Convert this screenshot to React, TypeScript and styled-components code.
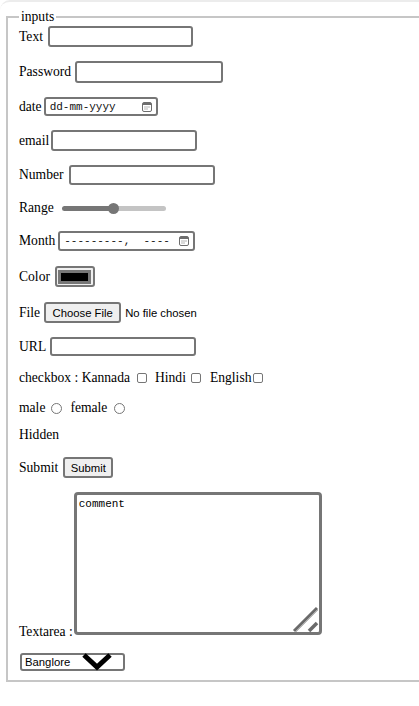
import React from "react";
import styled, { createGlobalStyle } from "styled-components";

const GlobalStyle = createGlobalStyle`
  html, body { margin: 0; padding: 0; background: #fff; overflow: hidden; }
  body {
    font-family: "Liberation Serif", "Times New Roman", serif;
    font-size: 13.6px;
    color: #000;
  }
  * { box-sizing: border-box; }
`;

const Frame = styled.div`
  width: 100%;
  height: 706px;
  border-top: 2px solid #ececec;
  border-top-left-radius: 10px;
`;

const Fieldset = styled.fieldset`
  margin: 6px 0 0 6px;
  padding: 1px 0 9px 11px;
  border: 2px solid #c6c6c6;
  border-right: none;
  min-width: 0;
`;

const Legend = styled.legend`
  padding: 0 2px;
  font-size: 13.6px;
  line-height: 17px;
`;

const Form = styled.div`
  display: flex;
  flex-direction: column;
`;

const Row = styled.div<{ $mt?: number; $h: number; $gap?: number; $align?: string; $ml?: number }>`
  display: flex;
  align-items: ${(p) => p.$align ?? "center"};
  gap: ${(p) => p.$gap ?? 3}px;
  height: ${(p) => p.$h}px;
  margin-top: ${(p) => p.$mt ?? 0}px;
  margin-left: ${(p) => p.$ml ?? 0}px;
  white-space: nowrap;
`;

const Label = styled.span<{ $ml?: number; $mb?: number }>`
  margin-left: ${(p) => p.$ml ?? 0}px;
  margin-bottom: ${(p) => p.$mb ?? 0}px;
  line-height: 16px;
`;

const TextInput = styled.input<{ $w: number; $h: number }>`
  width: ${(p) => p.$w}px;
  height: ${(p) => p.$h}px;
  margin: 0;
  padding: 1px 3px;
  border: 2px solid #767676;
  border-radius: 3px;
  background: #fff;
  font: 11.3px "Liberation Sans", Arial, sans-serif;
  outline: none;
`;

const PickerBox = styled.div<{ $w: number; $h: number; $pl: number }>`
  width: ${(p) => p.$w}px;
  height: ${(p) => p.$h}px;
  border: 2px solid #767676;
  border-radius: 3px;
  background: #fff;
  display: flex;
  align-items: center;
  justify-content: space-between;
  padding: 0 4px 0 ${(p) => p.$pl}px;
  font: 11px "Liberation Mono", "DejaVu Sans Mono", monospace;
  color: #111;
  white-space: pre;
`;

const Range = styled.input`
  -webkit-appearance: none;
  appearance: none;
  width: 104px;
  height: 12px;
  margin: 0;
  background: transparent;
  &::-webkit-slider-runnable-track {
    height: 5px;
    border-radius: 3px;
    background: linear-gradient(to right, #767676 0 50%, #c4c4c4 50% 100%);
  }
  &::-webkit-slider-thumb {
    -webkit-appearance: none;
    width: 11px;
    height: 11px;
    border-radius: 50%;
    background: #767676;
    margin-top: -3px;
    border: none;
  }
`;

const ColorControl = styled.div`
  width: 40px;
  height: 21px;
  border: 2px solid #767676;
  border-radius: 3px;
  background: #efefef;
  display: flex;
  align-items: center;
  justify-content: center;
`;

const Swatch = styled.span`
  width: 33px;
  height: 14px;
  border: 3px solid #777;
  background: #000;
`;

const Button = styled.button<{ $w: number; $h: number }>`
  width: ${(p) => p.$w}px;
  height: ${(p) => p.$h}px;
  margin: 0;
  padding: 0;
  border: 2px solid #767676;
  border-radius: 3px;
  background: #efefef;
  color: #000;
  font: 11.3px "Liberation Sans", Arial, sans-serif;
`;

const SmallText = styled.span`
  font: 11.3px "Liberation Sans", Arial, sans-serif;
`;

const Check = styled.input<{ $ml?: number; $round?: boolean }>`
  -webkit-appearance: none;
  appearance: none;
  width: ${(p) => (p.$round ? 11 : 10)}px;
  height: ${(p) => (p.$round ? 11 : 10)}px;
  margin: 0 0 0 ${(p) => p.$ml ?? 0}px;
  border: 1px solid #767676;
  border-radius: ${(p) => (p.$round ? "50%" : "2px")};
  background: #fff;
`;

const TextareaWrap = styled.div`
  position: relative;
  width: 248px;
  height: 143px;
`;

const Textarea = styled.textarea`
  width: 100%;
  height: 100%;
  margin: 0;
  padding: 3px 2px;
  border: 3px solid #767676;
  border-radius: 4px;
  resize: none;
  font: 11px "Liberation Mono", "DejaVu Sans Mono", monospace;
  color: #000;
  outline: none;
`;

const Grip = styled.svg`
  position: absolute;
  right: 0;
  bottom: 0;
  pointer-events: none;
`;

const SelectWrap = styled.div`
  position: relative;
  width: 105px;
  height: 18px;
`;

const Select = styled.select`
  -webkit-appearance: none;
  appearance: none;
  width: 100%;
  height: 100%;
  margin: 0;
  padding: 0 0 0 3px;
  border: 2px solid #767676;
  border-radius: 3px;
  background: #fff;
  font: 11.3px "Liberation Sans", Arial, sans-serif;
  color: #000;
  outline: none;
`;

const Chevron = styled.svg`
  position: absolute;
  left: 62px;
  top: 0;
  pointer-events: none;
`;

const CalendarIcon = () => (
  <svg width="10" height="10" viewBox="0 0 10 10">
    <rect x="0.5" y="0.5" width="9" height="9" rx="1.5" fill="#fff" stroke="#6d6d6d" />
    <rect x="1" y="1" width="8" height="2" fill="#6d6d6d" />
    <rect x="2.5" y="4.5" width="1" height="1" fill="#6d6d6d" />
    <rect x="4.5" y="4.5" width="1" height="1" fill="#6d6d6d" />
    <rect x="6.5" y="4.5" width="1" height="1" fill="#6d6d6d" />
    <rect x="2.5" y="6.5" width="1" height="1" fill="#6d6d6d" />
    <rect x="4.5" y="6.5" width="1" height="1" fill="#6d6d6d" />
  </svg>
);

export default function App() {
  return (
    <>
      <GlobalStyle />
      <Frame>
        <Fieldset>
          <Legend>inputs</Legend>
          <Form>
            <Row $h={21} $gap={5}>
              <Label>Text</Label>
              <TextInput type="text" $w={145} $h={21} />
            </Row>
            <Row $mt={14} $h={22} $gap={4}>
              <Label>Password</Label>
              <TextInput type="password" $w={148} $h={22} />
            </Row>
            <Row $mt={14} $h={19} $gap={2}>
              <Label>date</Label>
              <PickerBox $w={114} $h={19} $pl={4}>
                <span>dd-mm-yyyy</span>
                <CalendarIcon />
              </PickerBox>
            </Row>
            <Row $mt={14} $h={21} $gap={2}>
              <Label>email</Label>
              <TextInput type="email" $w={146} $h={21} />
            </Row>
            <Row $mt={14} $h={20} $gap={5}>
              <Label>Number</Label>
              <TextInput type="number" $w={146} $h={20} />
            </Row>
            <Row $mt={13} $h={20} $gap={8}>
              <Label>Range</Label>
              <Range type="range" defaultValue={50} />
            </Row>
            <Row $mt={13} $h={20}>
              <Label>Month</Label>
              <PickerBox $w={137} $h={20} $pl={4}>
                <span>{"---------,  ----"}</span>
                <CalendarIcon />
              </PickerBox>
            </Row>
            <Row $mt={15} $h={21} $gap={5}>
              <Label>Color</Label>
              <ColorControl>
                <Swatch />
              </ColorControl>
            </Row>
            <Row $mt={15} $h={21} $gap={4}>
              <Label>File</Label>
              <Button type="button" $w={77} $h={21}>Choose File</Button>
              <SmallText>No file chosen</SmallText>
            </Row>
            <Row $mt={14} $h={19} $gap={4}>
              <Label>URL</Label>
              <TextInput type="url" $w={146} $h={19} />
            </Row>
            <Row $mt={12} $h={20} $gap={0}>
              <Label>checkbox : Kannada</Label>
              <Check type="checkbox" $ml={7} />
              <Label $ml={8}>Hindi</Label>
              <Check type="checkbox" $ml={5} />
              <Label $ml={9}>English</Label>
              <Check type="checkbox" $ml={2} />
            </Row>
            <Row $mt={10} $h={20} $gap={0}>
              <Label>male</Label>
              <Check type="radio" name="g" $round $ml={6} />
              <Label $ml={8}>female</Label>
              <Check type="radio" name="g" $round $ml={7} />
            </Row>
            <Row $mt={7} $h={20}>
              <Label>Hidden</Label>
              <input type="hidden" />
            </Row>
            <Row $mt={12} $h={21} $gap={5}>
              <Label>Submit</Label>
              <Button type="submit" $w={50} $h={21}>Submit</Button>
            </Row>
            <Row $mt={14} $h={143} $gap={1} $align="flex-end">
              <Label $mb={-5}>Textarea :</Label>
              <TextareaWrap>
                <Textarea defaultValue="comment" />
                <Grip width="34" height="34" viewBox="0 0 34 34">
                  <line x1="6" y1="30" x2="29" y2="7" stroke="#6a6a6a" strokeWidth="3" />
                  <line x1="8" y1="31" x2="30" y2="9" stroke="#b8b8b8" strokeWidth="1" />
                  <line x1="21" y1="30" x2="29" y2="22" stroke="#6a6a6a" strokeWidth="3.5" />
                </Grip>
              </TextareaWrap>
            </Row>
            <Row $mt={18} $h={18} $ml={1}>
              <SelectWrap>
                <Select defaultValue="Banglore">
                  <option>Banglore</option>
                </Select>
                <Chevron width="30" height="18" viewBox="0 0 30 18">
                  <polyline points="2,2 15,14 28,2" fill="none" stroke="#000" strokeWidth="5" />
                </Chevron>
              </SelectWrap>
            </Row>
          </Form>
        </Fieldset>
      </Frame>
    </>
  );
}
